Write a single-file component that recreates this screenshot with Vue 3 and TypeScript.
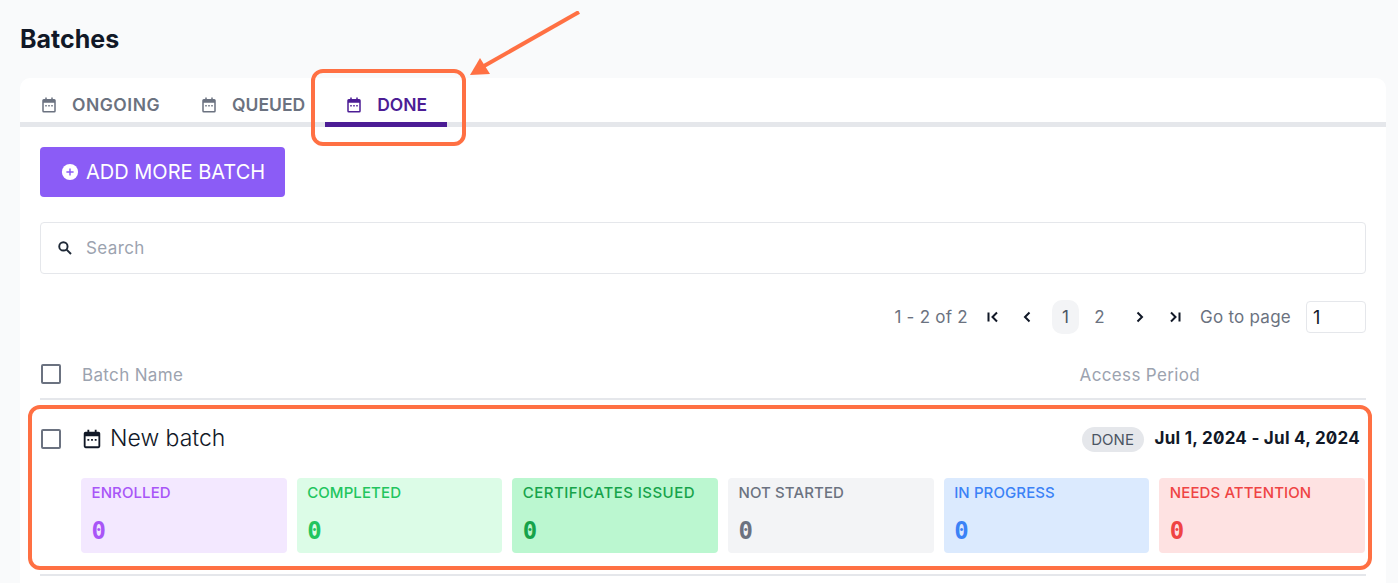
<script setup lang="ts">
interface Tab { label: string; active?: boolean }
interface Stat { label: string; cls: string }
const tabs: Tab[] = [{ label: 'ONGOING' }, { label: 'QUEUED' }, { label: 'DONE', active: true }]
const stats: Stat[] = [
  { label: 'ENROLLED', cls: 'purple' },
  { label: 'COMPLETED', cls: 'green' },
  { label: 'CERTIFICATES ISSUED', cls: 'emerald' },
  { label: 'NOT STARTED', cls: 'gray' },
  { label: 'IN PROGRESS', cls: 'blue' },
  { label: 'NEEDS ATTENTION', cls: 'red' },
]
const calendar = 'M7 2h2v2h6V2h2v2h2a2 2 0 0 1 2 2v14a2 2 0 0 1-2 2H5a2 2 0 0 1-2-2V6a2 2 0 0 1 2-2h2V2zM5 9v11h14V9H5zm2 3h2v2H7v-2zm4 0h2v2h-2v-2zm4 0h2v2h-2v-2z'
</script>

<template>
  <div class="page">
    <h1 class="title">Batches</h1>
    <section class="card">
      <nav class="tabs">
        <div v-for="t in tabs" :key="t.label" class="tab" :class="{ active: t.active }">
          <svg class="tab-icon" viewBox="0 0 24 24" fill="currentColor" fill-rule="evenodd"><path :d="calendar" /></svg>
          <span>{{ t.label }}</span>
        </div>
      </nav>
      <div class="body">
        <button class="add" type="button">
          <svg class="add-icon" viewBox="0 0 20 20"><circle cx="10" cy="10" r="9" fill="#fff" /><path d="M10 6v8M6 10h8" stroke="#8b5cf6" stroke-width="1.6" /></svg>
          ADD MORE BATCH
        </button>
        <div class="search">
          <svg class="search-icon" viewBox="0 0 20 20" fill="none" stroke="#1f2937" stroke-width="2.400"><circle cx="8" cy="8" r="5.2" /><path d="M12 12l5.500 5.500" /></svg>
          <span>Search</span>
        </div>
        <div class="pager">
          <span class="range">1 - 2 of 2</span>
          <svg class="pg first" viewBox="0 0 16 16" fill="none" stroke="#111827" stroke-width="2"><path d="M3.500 3.500v9M12 3.500 7.500 8l4.500 4.500" /></svg>
          <svg class="pg prev" viewBox="0 0 16 16" fill="none" stroke="#111827" stroke-width="2"><path d="M10.500 3.500 6 8l4.500 4.500" /></svg>
          <span class="num on">1</span>
          <span class="num">2</span>
          <svg class="pg next" viewBox="0 0 16 16" fill="none" stroke="#111827" stroke-width="2"><path d="M5.500 3.500 10 8l-4.500 4.500" /></svg>
          <svg class="pg last" viewBox="0 0 16 16" fill="none" stroke="#111827" stroke-width="2"><path d="M12.500 3.500v9M4 3.500 8.500 8 4 12.500" /></svg>
          <span class="goto">Go to page</span>
          <span class="page-input">1</span>
        </div>
        <div class="thead">
          <span class="check"></span>
          <span class="th-name">Batch Name</span>
          <span class="th-period">Access Period</span>
        </div>
        <div class="row">
          <div class="row-top">
            <span class="check"></span>
            <svg class="row-icon" viewBox="0 0 24 24" fill="currentColor" fill-rule="evenodd"><path :d="calendar" /></svg>
            <span class="row-name">New batch</span>
            <span class="badge">DONE</span>
            <span class="dates">Jul 1, 2024 - Jul 4, 2024</span>
          </div>
          <div class="stats">
            <div v-for="s in stats" :key="s.label" class="stat" :class="s.cls">
              <div class="stat-label">{{ s.label }}</div>
              <div class="stat-value">0</div>
            </div>
          </div>
        </div>
      </div>
    </section>

    <div class="mark mark-tab"></div>
    <div class="mark mark-row"></div>
    <svg class="arrow" width="130" height="80" viewBox="0 0 130 80" fill="#ff7043">
      <path d="M111 1 L16 55" stroke="#ff7043" stroke-width="4" fill="none" />
      <path d="M2 64 L12 47 L22 63 Z" />
    </svg>
  </div>
</template>

<style>
html, body { margin: 0; background: #f9fafb; }
</style>

<style scoped>
.page {
  position: relative;
  width: 1398px;
  height: 583px;
  overflow: hidden;
  box-sizing: border-box;
  padding: 0 12px 0 20px;
  background: #f9fafb;
  font-family: Inter, "Liberation Sans", sans-serif;
  color: #111827;
}
.title {
  margin: 0;
  padding-top: 24px;
  height: 78px;
  box-sizing: border-box;
  font-size: 25px;
  line-height: 30px;
  font-weight: 700;
  color: #111827;
}
.card {
  height: 505px;
  background: #fff;
  border-radius: 10px 10px 0 0;
}
.tabs {
  display: flex;
  height: 49px;
  box-sizing: border-box;
  border-bottom: 5px solid #e5e7eb;
}
.tab {
  display: flex;
  align-items: center;
  box-sizing: border-box;
  height: 49px;
  padding: 9px 20px 0 20px;
  font-size: 17.500px;
  font-weight: 600;
  color: #6b7280;
  border-bottom: 5px solid transparent;
}
.tab:first-child { letter-spacing: 0.5px; }
.tab.active {
  color: #4c1d95;
  border-bottom-color: #4c1d95;
}
.tab-icon {
  width: 18px;
  height: 18px;
  margin-right: 14px;
}
.body {
  padding: 20px 20px 0;
}
.add {
  display: flex;
  align-items: center;
  gap: 7px;
  width: 245px;
  height: 50px;
  padding: 0 0 0 21px;
  border: 0;
  border-radius: 4px;
  background: #8b5cf6;
  color: #fff;
  font-family: inherit;
  font-size: 20px;
  font-weight: 400;
  white-space: nowrap;
}
.add-icon {
  width: 18px;
  height: 18px;
}
.search {
  display: flex;
  align-items: center;
  height: 52px;
  box-sizing: border-box;
  margin-top: 25px;
  padding-left: 16px;
  border: 1px solid #e5e7eb;
  border-radius: 4px;
  font-size: 17px;
  letter-spacing: 0.4px;
  color: #9ca3af;
}
.search-icon {
  width: 16px;
  height: 16px;
  margin-right: 13px;
}
.pager {
  display: flex;
  align-items: center;
  justify-content: flex-end;
  height: 34px;
  margin-top: 26px;
  font-size: 17px;
  letter-spacing: 0.25px;
  color: #6b7280;
}
.range { margin-right: 17px; }
.pg { width: 16px; height: 16px; }
.prev { margin-left: 18px; }
.num {
  display: flex;
  align-items: center;
  justify-content: center;
  width: 27px;
  height: 34px;
  border-radius: 10px;
}
.num.on { background: #f3f4f6; color: #4b5563; margin-left: 17px; }
.num + .num { margin-left: 7px; }
.next { margin-left: 19px; }
.last { margin-left: 19px; }
.goto { margin-left: 17px; margin-right: 15px; }
.page-input {
  display: flex;
  align-items: center;
  width: 60px;
  height: 32px;
  padding-left: 6px;
  box-sizing: border-box;
  border: 1px solid #e5e7eb;
  border-radius: 4px;
  font-size: 18px;
  color: #111827;
}
.thead {
  display: flex;
  align-items: center;
  height: 50px;
  margin-top: 16px;
  padding-top: 2px;
  box-sizing: border-box;
  border-bottom: 2px solid #e5e7eb;
  padding-left: 1px;
  font-size: 17px;
  letter-spacing: 0.35px;
  color: #9ca3af;
}
.check {
  flex: none;
  width: 20px;
  height: 20px;
  box-sizing: border-box;
  border: 2px solid #6b7280;
  border-radius: 2px;
}
.th-name { margin-left: 21px; }
.th-period { margin-left: auto; margin-right: 166px; }
.thead .check { margin-top: -2px; }
.row {
  height: 176px;
  box-sizing: border-box;
  border-bottom: 2px solid #e5e7eb;
}
.row-top {
  display: flex;
  align-items: center;
  height: 78px;
  padding-left: 1px;
  padding-right: 6px;
}
.row-icon {
  width: 22px;
  height: 22px;
  margin-left: 20px;
  margin-right: 7px;
  color: #111827;
}
.row-name {
  font-size: 23px;
  font-weight: 300;
  color: #111827;
  margin-top: -2px;
}
.badge {
  margin-left: auto;
  display: flex;
  align-items: center;
  justify-content: center;
  width: 62px;
  height: 25px;
  border-radius: 13px;
  background: #e5e7eb;
  font-size: 15px;
  color: #4b5563;
}
.dates {
  margin-left: 11px;
  font-size: 17px;
  font-weight: 700;
  font-feature-settings: "zero";
  letter-spacing: 0.25px;
  color: #111827;
  margin-top: -2px;
}
.stats {
  display: grid;
  grid-template-columns: repeat(6, 1fr);
  gap: 10px;
  margin-left: 41px;
  margin-right: 1px;
}
.stat {
  height: 75px;
  box-sizing: border-box;
  padding: 6px 11px 6px 10.500px;
  border-radius: 4px;
}
.stat-label {
  font-size: 15px;
  line-height: 18px;
  font-weight: 500;
  letter-spacing: 0.1px;
  white-space: nowrap;
}
.emerald .stat-label { letter-spacing: 0.45px; }
.stat-value {
  margin-top: 15px;
  font-family: "DejaVu Sans Mono", monospace;
  font-size: 24px;
  line-height: 28px;
  font-weight: 700;
}
.purple { background: #f3e8ff; color: #a855f7; }
.green { background: #dcfce7; color: #22c55e; }
.emerald { background: #bbf7d0; color: #16a34a; }
.gray { background: #f3f4f6; color: #6b7280; }
.blue { background: #dbeafe; color: #3b82f6; }
.red { background: #fee2e2; color: #ef4444; }
.mark {
  position: absolute;
  box-sizing: border-box;
  border: 4px solid #ff7043;
}
.mark-tab { left: 311px; top: 69px; width: 155px; height: 77px; border-radius: 12px; }
.mark-row { left: 28px; top: 405px; width: 1344px; height: 165px; border-radius: 12px; }
.arrow { position: absolute; left: 468px; top: 11px; }
</style>
